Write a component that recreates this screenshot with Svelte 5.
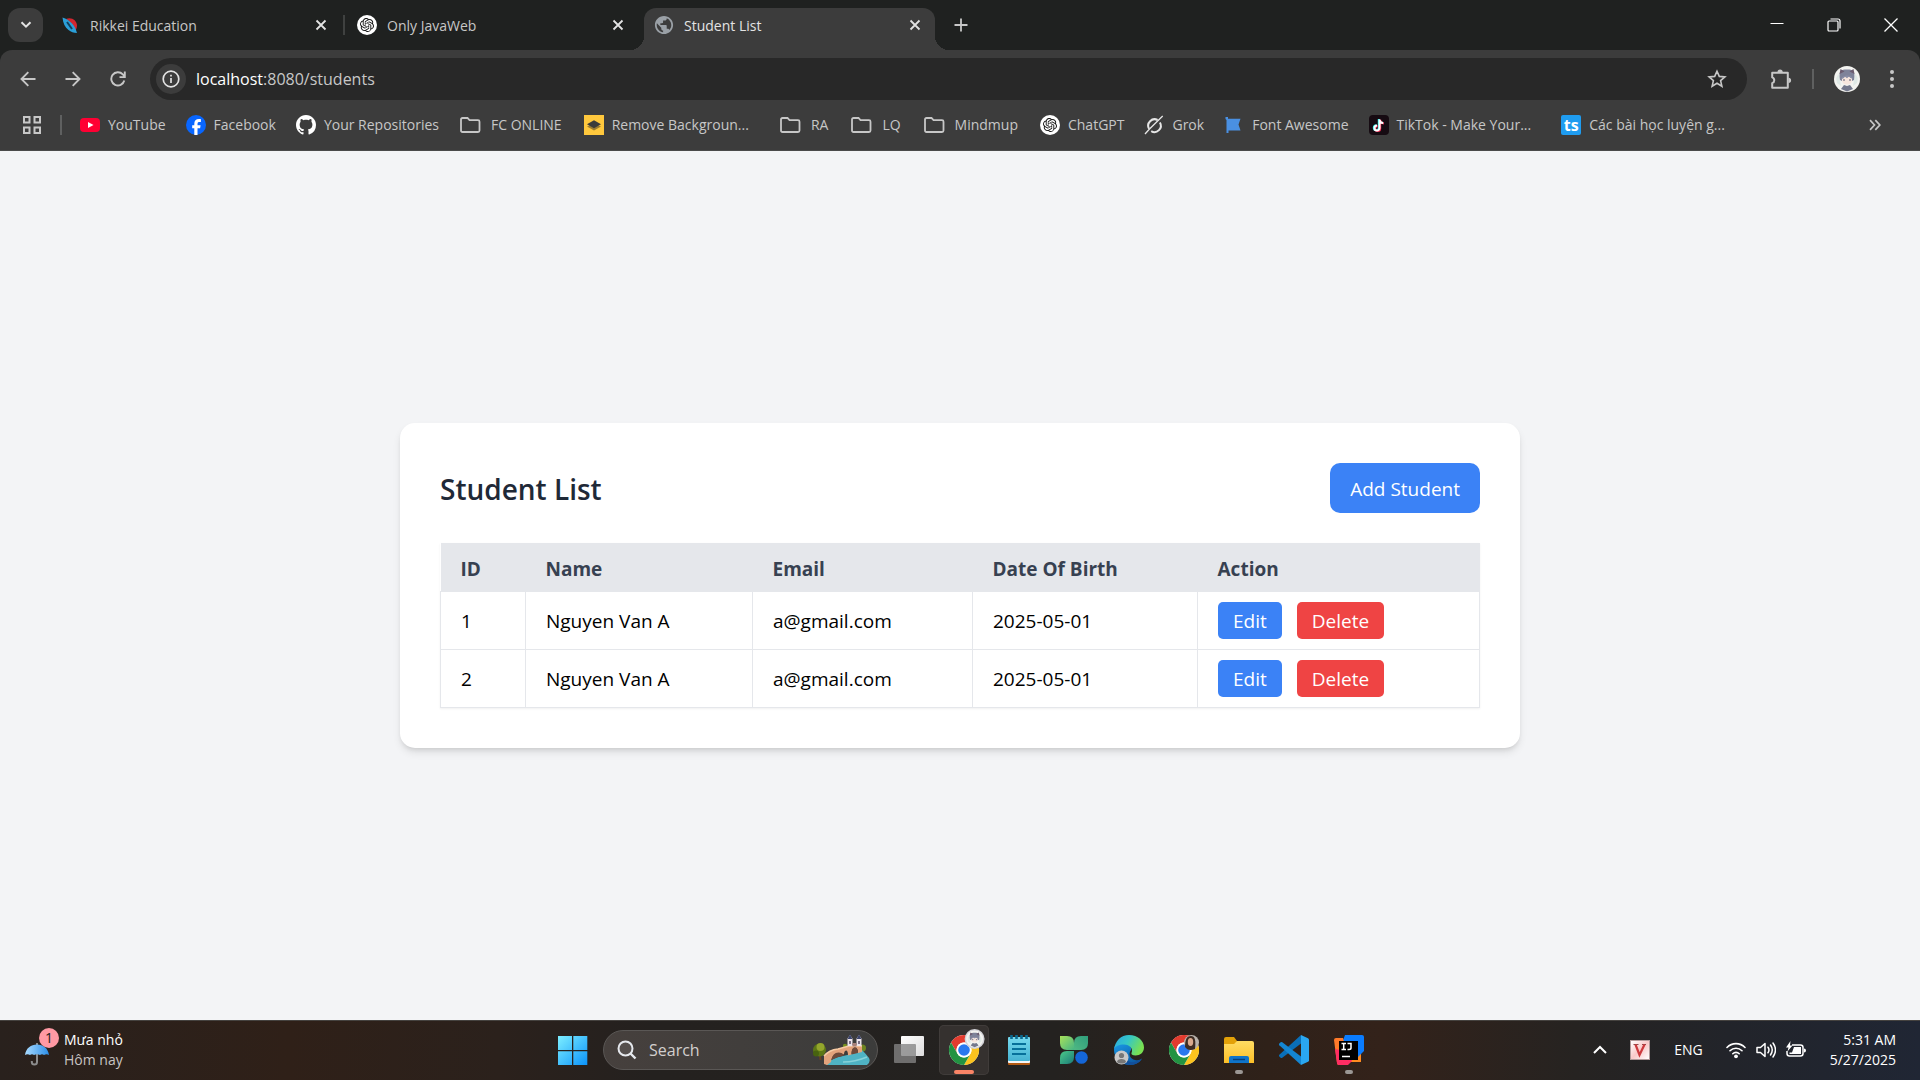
<script>
  const tabs = [
    { title: 'Rikkei Education', icon: 'rikkei', active: false },
    { title: 'Only JavaWeb', icon: 'gpt', active: false },
    { title: 'Student List', icon: 'globe', active: true }
  ];

  const bookmarks = [
    { label: 'YouTube', icon: 'youtube' },
    { label: 'Facebook', icon: 'facebook' },
    { label: 'Your Repositories', icon: 'github' },
    { label: 'FC ONLINE', icon: 'folder' },
    { label: 'Remove Backgroun...', icon: 'layers' },
    { label: 'RA', icon: 'folder', gap: true },
    { label: 'LQ', icon: 'folder' },
    { label: 'Mindmup', icon: 'folder' },
    { label: 'ChatGPT', icon: 'gpt' },
    { label: 'Grok', icon: 'grok' },
    { label: 'Font Awesome', icon: 'flag' },
    { label: 'TikTok - Make Your...', icon: 'tiktok' },
    { label: 'Các bài học luyện g...', icon: 'ts', gap: true }
  ];

  const columns = ['ID', 'Name', 'Email', 'Date Of Birth', 'Action'];
  const students = [
    { id: 1, name: 'Nguyen Van A', email: 'a@gmail.com', dob: '2025-05-01' },
    { id: 2, name: 'Nguyen Van A', email: 'a@gmail.com', dob: '2025-05-01' }
  ];

  const apps = [
    { name: 'Task view', icon: 'taskview' },
    { name: 'Chrome', icon: 'chrome', state: 'active' },
    { name: 'Notepad', icon: 'notepad' },
    { name: 'Clover', icon: 'clover' },
    { name: 'Edge', icon: 'edge' },
    { name: 'Chrome profile', icon: 'chrome2' },
    { name: 'File Explorer', icon: 'explorer', state: 'open' },
    { name: 'Visual Studio Code', icon: 'vscode' },
    { name: 'IntelliJ IDEA', icon: 'idea', state: 'open' }
  ];
</script>

{#snippet closeX()}
  <svg width="12" height="12" viewBox="0 0 12 12" aria-hidden="true"><path d="M1.5 1.5l9 9M10.5 1.5l-9 9" stroke="currentColor" stroke-width="1.8" /></svg>
{/snippet}

{#snippet chromeLogo()}
  <circle cx="15" cy="15" r="15" fill="#fff" />
  <path d="M2 7.5A15 15 0 0 1 28 7.5H15A7.5 7.5 0 0 0 8.5 18.75z" fill="#e33b2e" />
  <path d="M28 7.5A15 15 0 0 1 15 30L21.5 18.75A7.5 7.5 0 0 0 15 7.5z" fill="#fcc31e" />
  <path d="M15 30A15 15 0 0 1 2 7.5L8.5 18.75A7.5 7.5 0 0 0 21.5 18.75z" fill="#229342" />
  <circle cx="15" cy="15" r="7.5" fill="#fff" />
  <circle cx="15" cy="15" r="5.8" fill="#2a78ee" />
{/snippet}

{#snippet face()}
  <circle cx="13" cy="13" r="13" fill="#f3f3f0" />
  <path d="M3 17q-2-6 2-9l2 12zM23 17q2-6-2-9l-2 12z" fill="#dfe9e6" />
  <path d="M6 14C4 3 9 3.500 13 3.500S22 3 20 14l-2 1H8z" fill="#7e8299" />
  <path d="M5.500 8l1-5 4 2.500zM20.500 8l-1-5-4 2.500z" fill="#6c5c70" />
  <path d="M8 12q5-3 10 0v3q-1 3.500-5 3.500T8 15z" fill="#f7e6de" />
  <path d="M7 13.500c1-5 11-5.500 12-.5l-2.500-1-1.500-1.500-2 1.700-2-1.500-1.500 1.600z" fill="#8a8ea6" />
  <path d="M9 14h2M15 14h2" stroke="#5b5a70" stroke-width="1.200" />
  <path d="M7 23l3-4 3 1 3-1 3 4-6 2.500z" fill="#74788c" />
{/snippet}

{#snippet icon(name)}
  {#if name === 'rikkei'}
    <svg width="20" height="20" viewBox="0 0 20 20" aria-hidden="true">
      <path d="M6 4c5-2.500 11 1 11 6.500 0 2.500-1 4.500-2.500 6C14.500 12 11.500 7.500 6 4z" fill="#d3262f" />
      <path d="M2.500 2.500C10 5 15 10 17 18c-3.500-.3-6-1-8.500-3C5 12.500 3 8 2.500 2.500z" fill="#2b9fd8" />
      <path d="M7 7l5 7" stroke="#12405e" stroke-width="2" />
    </svg>
  {:else if name === 'gpt'}
    <svg width="20" height="20" viewBox="0 0 20 20" aria-hidden="true">
      <circle cx="10" cy="10" r="10" fill="#fff" />
      <path transform="translate(3 3) scale(.583)" fill="#111" d="M22.2819 9.8211a5.9847 5.9847 0 0 0-.5157-4.9108 6.0462 6.0462 0 0 0-6.5098-2.9A6.0651 6.0651 0 0 0 4.9807 4.1818a5.9847 5.9847 0 0 0-3.9977 2.9 6.0462 6.0462 0 0 0 .7427 7.0966 5.98 5.98 0 0 0 .511 4.9107 6.051 6.051 0 0 0 6.5146 2.9001A5.9847 5.9847 0 0 0 13.2599 24a6.0557 6.0557 0 0 0 5.7718-4.2058 5.9894 5.9894 0 0 0 3.9977-2.9001 6.0557 6.0557 0 0 0-.7475-7.0729zm-9.022 12.6081a4.4755 4.4755 0 0 1-2.8764-1.0408l.1419-.0804 4.7783-2.7582a.7948.7948 0 0 0 .3927-.6813v-6.7369l2.02 1.1686a.071.071 0 0 1 .038.052v5.5826a4.504 4.504 0 0 1-4.4945 4.4944zm-9.6607-4.1254a4.4708 4.4708 0 0 1-.5346-3.0137l.142.0852 4.783 2.7582a.7712.7712 0 0 0 .7806 0l5.8428-3.3685v2.3324a.0804.0804 0 0 1-.0332.0615L9.74 19.9502a4.4992 4.4992 0 0 1-6.1408-1.6464zM2.3408 7.8956a4.485 4.485 0 0 1 2.3655-1.9728V11.6a.7664.7664 0 0 0 .3879.6765l5.8144 3.3543-2.0201 1.1685a.0757.0757 0 0 1-.071 0l-4.8303-2.7865A4.504 4.504 0 0 1 2.3408 7.872zm16.5963 3.8558L13.1038 8.364 15.1192 7.2a.0757.0757 0 0 1 .071 0l4.8303 2.7913a4.4944 4.4944 0 0 1-.6765 8.1042v-5.6772a.79.79 0 0 0-.407-.667zm2.0107-3.0231l-.142-.0852-4.7735-2.7818a.7759.7759 0 0 0-.7854 0L9.409 9.2297V6.8974a.0662.0662 0 0 1 .0284-.0615l4.8303-2.7866a4.4992 4.4992 0 0 1 6.6802 4.66zM8.3065 12.863l-2.02-1.1638a.0804.0804 0 0 1-.038-.0567V6.0742a4.4992 4.4992 0 0 1 7.3757-3.4537l-.142.0805L8.704 5.459a.7948.7948 0 0 0-.3927.6813zm1.0976-2.3654l2.602-1.4998 2.6069 1.4998v2.9994l-2.5974 1.4997-2.6067-1.4997Z" />
    </svg>
  {:else if name === 'globe'}
    <svg width="20" height="20" viewBox="1 1 22 22" aria-hidden="true">
      <path fill="#9aa0a6" d="M12 2C6.480 2 2 6.480 2 12s4.480 10 10 10 10-4.480 10-10S17.520 2 12 2zm-1 17.930c-3.950-.490-7-3.850-7-7.930 0-.620.080-1.210.210-1.790L9 15v1c0 1.100.9 2 2 2v1.930zm6.900-2.540c-.260-.810-1-1.390-1.900-1.390h-1v-3c0-.550-.450-1-1-1H8v-2h2c.550 0 1-.450 1-1V7h2c1.100 0 2-.9 2-2v-.410c2.930 1.190 5 4.060 5 7.410 0 2.080-.8 3.970-2.100 5.390z" />
    </svg>
  {:else if name === 'youtube'}
    <svg width="20" height="20" viewBox="0 0 20 20" aria-hidden="true"><rect y="3" width="20" height="14" rx="4" fill="#ff0033" /><path d="M8 7l5.500 3L8 13z" fill="#fff" /></svg>
  {:else if name === 'facebook'}
    <svg width="20" height="20" viewBox="0 0 20 20" aria-hidden="true"><circle cx="10" cy="10" r="10" fill="#0866ff" /><path d="M8.300 20v-6.700H6.200v-3h2.100V9c0-3.400 1.500-4.900 4.800-4.900.6 0 1.400.1 1.800.2V7h-1.300c-1.500 0-2.100.6-2.100 2v1.300h3.100l-.5 3h-2.600V20z" fill="#fff" /></svg>
  {:else if name === 'github'}
    <svg width="20" height="20" viewBox="0 0 16 16" aria-hidden="true"><path fill="#fff" d="M8 0C3.580 0 0 3.580 0 8c0 3.540 2.290 6.530 5.470 7.590.4.070.550-.170.550-.380 0-.190-.010-.820-.010-1.490-2.010.370-2.530-.490-2.690-.940-.090-.230-.480-.940-.820-1.130-.280-.150-.680-.520-.010-.530.630-.010 1.080.580 1.230.820.720 1.210 1.870.870 2.330.660.070-.520.280-.870.510-1.070-1.780-.200-3.640-.890-3.640-3.950 0-.870.310-1.590.820-2.150-.080-.200-.360-1.020.080-2.120 0 0 .670-.210 2.200.820.640-.180 1.320-.270 2-.270s1.360.090 2 .270c1.530-1.040 2.200-.820 2.200-.820.440 1.100.160 1.920.080 2.120.510.560.820 1.270.820 2.150 0 3.070-1.870 3.750-3.650 3.950.290.250.540.730.540 1.480 0 1.070-.010 1.930-.010 2.200 0 .210.150.460.550.380A8.010 8.010 0 0 0 16 8c0-4.420-3.580-8-8-8z" /></svg>
  {:else if name === 'folder'}
    <svg width="22" height="20" viewBox="0 0 22 20" aria-hidden="true"><path d="M2 4.500q0-1.500 1.500-1.500H8.500L10.500 5.200H19q1.500 0 1.500 1.500V15.500q0 1.500-1.500 1.500H3.500Q2 17 2 15.500z" fill="none" stroke="#c7c7c7" stroke-width="1.800" /></svg>
  {:else if name === 'layers'}
    <svg width="20" height="20" viewBox="0 0 20 20" aria-hidden="true"><rect width="20" height="20" fill="#ffc83d" /><path d="M3 11.500l7-3 7 3-7 4z" fill="#9c7c30" /><path d="M3 9.200L10 5.200l7 4-7 4z" fill="#3b3b3b" /></svg>
  {:else if name === 'grok'}
    <svg width="20" height="20" viewBox="0 0 20 20" aria-hidden="true"><g fill="none" stroke="#e6e6e6" stroke-width="2"><path d="M13.600 5A6.400 6.400 0 0 0 5 13.700M15.900 7.400A6.400 6.400 0 0 1 7.200 16.200" /><path d="M1 19l4.500-5L18.700 1" stroke-width="1.300" /></g></svg>
  {:else if name === 'flag'}
    <svg width="20" height="20" viewBox="0 0 20 20" aria-hidden="true"><path d="M1.500 2h2.500v1.700H16.500L14.500 9.500l2 6H4.500V18H2.500V5L1.500 4z" fill="#4a90e2" /></svg>
  {:else if name === 'tiktok'}
    <svg width="20" height="20" viewBox="0 0 20 20" aria-hidden="true">
      <rect width="20" height="20" rx="4" fill="#160b12" />
      <g fill="none" stroke-width="2">
        <path d="M9.800 4v8.700a2.500 2.500 0 1 1-2.500-2.500M9.800 4.400c.3 2 1.700 3.200 3.700 3.300" stroke="#25f4ee" />
        <path d="M11.200 4.800v8.700A2.500 2.500 0 1 1 8.700 11M11.200 5.200c.3 2 1.700 3.200 3.700 3.300" stroke="#fe2c55" />
        <path d="M10.500 4.400v8.700A2.500 2.500 0 1 1 8 10.600M10.500 4.800c.3 2 1.700 3.200 3.700 3.300" stroke="#fff" />
      </g>
    </svg>
  {:else if name === 'ts'}
    <span class="ts">ts</span>
  {:else if name === 'taskview'}
    <svg width="30" height="30" viewBox="0 0 30 30" aria-hidden="true">
      <defs><linearGradient id="tv" x2="1" y2="1"><stop stop-color="#fff" /><stop offset="1" stop-color="#dcdcdc" /></linearGradient></defs>
      <rect x="7" y="1" width="23" height="20" rx="1" fill="url(#tv)" /><rect y="9" width="22" height="19" rx="1" fill="#848484" fill-opacity=".78" />
    </svg>
  {:else if name === 'chrome'}
    <svg class="overflowing" width="30" height="30" viewBox="0 0 30 30" aria-hidden="true">
      {@render chromeLogo()}
      <circle cx="25.600" cy="4" r="10" fill="#d3d3d8" />
      <g transform="translate(17.100 -4.500) scale(.655)">{@render face()}</g>
    </svg>
  {:else if name === 'notepad'}
    <svg width="30" height="30" viewBox="0 0 30 30" aria-hidden="true">
      <defs><linearGradient id="np" x2="0" y2="1"><stop stop-color="#75d9ee" /><stop offset="1" stop-color="#46b3d2" /></linearGradient></defs>
      <rect x="4" y="24" width="22" height="6" rx="1" fill="#b35a12" /><rect x="4" y="22" width="22" height="6" rx="1" fill="#f5f5f5" /><rect x="4" y="2" width="22" height="24" rx="1" fill="url(#np)" />
      <path d="M8 9h14M8 14h14M8 19h14" stroke="#06709a" stroke-width="1.800" />
      <path d="M7.500 0v4M12.500 0v4M17.500 0v4M22.500 0v4" stroke="#0a6a90" stroke-width="2.600" />
    </svg>
  {:else if name === 'clover'}
    <svg width="30" height="30" viewBox="0 0 30 30" aria-hidden="true">
      <defs>
        <linearGradient id="c1" x2="1" y2="1"><stop stop-color="#a8e05a" /><stop offset="1" stop-color="#45b585" /></linearGradient>
        <linearGradient id="c2" x1="1" x2="0" y2="1"><stop stop-color="#2f9e7c" /><stop offset="1" stop-color="#4fb883" /></linearGradient>
        <linearGradient id="c3" x2="1" y2="1"><stop stop-color="#4ccb8a" /><stop offset="1" stop-color="#1b7a78" /></linearGradient>
      </defs>
      <path d="M1 1h7q7 0 7 7v7H8q-7 0-7-7z" fill="url(#c1)" /><path d="M29 1h-7q-7 0-7 7v7h7q7 0 7-7z" fill="url(#c2)" /><path d="M1 29h7q7 0 7-7v-6H8q-7 0-7 7z" fill="url(#c3)" /><circle cx="22.500" cy="22.500" r="6.300" fill="#1466d8" />
    </svg>
  {:else if name === 'edge'}
    <svg width="30" height="30" viewBox="0 0 30 30" aria-hidden="true">
      <defs>
        <linearGradient id="e1" x2="1" y2=".4"><stop stop-color="#2aa5e6" /><stop offset=".5" stop-color="#35c7c6" /><stop offset="1" stop-color="#78e052" /></linearGradient>
        <linearGradient id="e2" x2=".6" y2="1"><stop stop-color="#1b9be8" /><stop offset="1" stop-color="#0c59a4" /></linearGradient>
      </defs>
      <path d="M0 15C0 9 5 8 9 8c6 0 9 4 8 7-3 4-1 9 4 10 3 .5 5 0 7-1-3 4-7 6-12.500 6C7 30 0 23 0 15z" fill="url(#e2)" />
      <path d="M10 17c-1 6 4 11 10 10 4-.5 6-2 8-4-3 6-8 7-13 7-5-1-8-7-5-13z" fill="#124f9a" />
      <path d="M0 14.500C1 6 7 0 15 0c9 0 15 6 15 12.500 0 5-4 8-8.500 8-3 0-4.500-1-4-2.500 2-4-1.500-8.500-7.500-8.500C5 9.500 1 11 0 14.500z" fill="url(#e1)" />
      <circle cx="7.500" cy="22.500" r="7" fill="#c9c9c9" /><circle cx="7.500" cy="20.500" r="2.600" fill="#777" /><path d="M3 27c0-4 9-4 9 0-2 2-7 2-9 0z" fill="#777" />
    </svg>
  {:else if name === 'chrome2'}
    <svg width="30" height="30" viewBox="0 0 30 30" aria-hidden="true">
      {@render chromeLogo()}
      <circle cx="22.500" cy="7.500" r="7.500" fill="#b9b3ad" /><path d="M16 12c0-8 2-11 6-11s5 4 4 13q-5 2-8 0z" fill="#3d2c23" /><ellipse cx="21.500" cy="7" rx="2.700" ry="4" fill="#d9a98e" />
    </svg>
  {:else if name === 'explorer'}
    <svg width="30" height="30" viewBox="0 0 30 30" aria-hidden="true">
      <defs><linearGradient id="fx" x2="0" y2="1"><stop stop-color="#ffdc63" /><stop offset="1" stop-color="#fcbf28" /></linearGradient></defs>
      <path d="M0 4q0-2 2-2h8l3 4h15v6H0z" fill="#e3a108" /><path d="M0 9h10l3-3h15q2 0 2 2v20H0z" fill="url(#fx)" /><path d="M5 28v-5q0-2 2-2h16q2 0 2 2v5z" fill="#0f74c9" /><path d="M9 24.500h12" stroke="#073f78" stroke-width="1.400" />
    </svg>
  {:else if name === 'vscode'}
    <svg width="30" height="30" viewBox="0 0 30 30" aria-hidden="true">
      <path d="M22 0v8.500L3.300 22.700q-.9.600-1.700 0L.3 21.400q-.8-.8 0-1.600z" fill="#0a6fb8" /><path d="M22 30v-8.500L3.300 7.300q-.9-.6-1.700 0L.3 8.600q-.8.8 0 1.600z" fill="#1486d3" /><path d="M22 0l7 3.200q1 .5 1 1.600v20.400q0 1.100-1 1.600L22 30z" fill="#2aa7f1" />
    </svg>
  {:else if name === 'idea'}
    <svg width="30" height="30" viewBox="0 0 30 30" aria-hidden="true">
      <path d="M16 14h11v13H12z" fill="#ff8a1f" /><path d="M11 0h17q2 0 2 2v14l-6 6L8 8z" fill="#0a7cff" /><path d="M0 5q0-2 2-2h7l6 22v3l-3 2H5q-2 0-2-2z" fill="#ff7a2a" /><path d="M1 14l14 3 3 9-4 4H5q-2 0-2-2z" fill="#ff2d62" />
      <rect x="5" y="6" width="19" height="19" fill="#000" /><path d="M7.500 8.500h4.500M9.700 8.500v6M7.500 14.500h4.500M13.500 8.500h3.500v4.500q0 1.500-2 1.500h-1.500M8 21.500h8" stroke="#fff" stroke-width="1.500" fill="none" />
    </svg>
  {/if}
{/snippet}

<div class="desktop">
  <header class="browser">
    <div class="tabstrip">
      <button class="tab-search" aria-label="Search tabs">
        <svg width="12" height="8" viewBox="0 0 12 8" aria-hidden="true"><path d="M1.500 1.200L6 5.700l4.500-4.500" fill="none" stroke="#e3e3e3" stroke-width="2" /></svg>
      </button>
      <div class="tabs">
        {#each tabs as tab}
          <div class="tab" class:active={tab.active}>
            <span class="favicon">{@render icon(tab.icon)}</span>
            <span class="tab-title">{tab.title}</span>
            <button class="bare close" aria-label="Close {tab.title}">{@render closeX()}</button>
          </div>
        {/each}
      </div>
      <button class="bare new-tab" aria-label="New tab">
        <svg width="14" height="14" viewBox="0 0 14 14" aria-hidden="true"><path d="M7 .5v13M.5 7h13" stroke="#c7c7c7" stroke-width="1.800" /></svg>
      </button>
      <div class="window-controls">
        <button class="bare" aria-label="Minimize"><svg width="14" height="14" viewBox="0 0 14 14" aria-hidden="true"><path d="M.5 5.500h13" stroke="#fff" /></svg></button>
        <button class="bare" aria-label="Restore"><svg width="14" height="14" viewBox="0 0 14 14" aria-hidden="true"><rect x="1" y="3" width="10" height="10" rx="1" fill="none" stroke="#fff" stroke-width="1.200" /><path d="M3.500 1h7.500q2 0 2 2v7.500" fill="none" stroke="#fff" stroke-width="1.200" /></svg></button>
        <button class="bare" aria-label="Close window"><svg width="14" height="14" viewBox="0 0 14 14" aria-hidden="true"><path d="M.5.5l13 13M13.500.5l-13 13" stroke="#fff" stroke-width="1.300" /></svg></button>
      </div>
    </div>

    <div class="toolbar">
      <nav class="nav" aria-label="History">
        <button class="bare" aria-label="Back"><svg width="16" height="16" viewBox="0 0 16 16" aria-hidden="true"><path d="M15.500 8H2M8.300 1.200L1.500 8l6.800 6.800" fill="none" stroke="#c7c7c7" stroke-width="1.900" /></svg></button>
        <button class="bare" aria-label="Forward"><svg width="16" height="16" viewBox="0 0 16 16" aria-hidden="true"><path d="M.5 8H14M7.700 1.200L14.500 8l-6.800 6.800" fill="none" stroke="#c7c7c7" stroke-width="1.900" /></svg></button>
        <button class="bare" aria-label="Reload"><svg width="16" height="16" viewBox="0 0 16 16" aria-hidden="true"><path d="M14.300 9.500A6.600 6.600 0 1 1 12.800 3.400L14.800 5.600M14.800.5v5.600H9.500" fill="none" stroke="#c7c7c7" stroke-width="1.900" /></svg></button>
      </nav>
      <div class="omnibox">
        <button class="site-info" aria-label="Site information"><svg width="18" height="18" viewBox="0 0 18 18" aria-hidden="true"><circle cx="9" cy="9" r="7.800" fill="none" stroke="#e3e3e3" stroke-width="1.700" /><path d="M9 8v5M9 4.800v1.800" stroke="#e3e3e3" stroke-width="1.700" /></svg></button>
        <div class="url" role="textbox" tabindex="0" aria-label="Address bar"><b>localhost</b>:8080/students</div>
        <button class="bare star" aria-label="Bookmark this tab"><svg width="20" height="20" viewBox="0 0 20 20" aria-hidden="true"><path d="M10 2.200l2.300 5.200 5.600.5-4.300 3.700 1.300 5.600L10 14.200l-4.900 3 1.300-5.600L2.100 7.900l5.600-.5z" fill="none" stroke="#c7c7c7" stroke-width="1.600" /></svg></button>
      </div>
      <div class="actions">
        <button class="bare" aria-label="Extensions"><svg width="22" height="22" viewBox="0 0 22 22" aria-hidden="true"><path d="M2.200 4.700h15.600v15.100H2.200v-4.700a3 3 0 0 0 0-5.700z" fill="none" stroke="#c7c7c7" stroke-width="2" stroke-linejoin="round" /><path d="M7.500 4a2.600 2.600 0 0 1 5.200 0zM18.500 9.700a2.600 2.600 0 0 1 0 5.200z" fill="#c7c7c7" /></svg></button>
        <span class="divider"></span>
        <button class="bare" aria-label="Profile"><svg width="26" height="26" viewBox="0 0 26 26" aria-hidden="true">{@render face()}</svg></button>
        <button class="bare menu" aria-label="Menu"><svg width="6" height="22" viewBox="0 0 6 22" aria-hidden="true"><g fill="#c7c7c7"><circle cx="3" cy="4" r="2" /><circle cx="3" cy="11" r="2" /><circle cx="3" cy="18" r="2" /></g></svg></button>
      </div>
    </div>

    <nav class="bookmarks" aria-label="Bookmarks">
      <button class="bare" aria-label="Apps"><svg width="18" height="18" viewBox="0 0 18 18" aria-hidden="true"><g fill="none" stroke="#c7c7c7" stroke-width="2"><rect x="1" y="1" width="5.500" height="5.500" /><rect x="11.500" y="1" width="5.500" height="5.500" /><rect x="1" y="11.500" width="5.500" height="5.500" /><rect x="11.500" y="11.500" width="5.500" height="5.500" /></g></svg></button>
      <span class="divider"></span>
      <div class="links">
        {#each bookmarks as b}
          <a href="#top" class:gap={b.gap} class:folder={b.icon === 'folder'}>{@render icon(b.icon)}<span>{b.label}</span></a>
        {/each}
      </div>
      <button class="bare more" aria-label="More bookmarks"><svg width="12" height="12" viewBox="0 0 12 12" aria-hidden="true"><path d="M1 1.200L5.500 6 1 10.800M6.300 1.200L10.800 6l-4.500 4.800" fill="none" stroke="#c7c7c7" stroke-width="1.700" /></svg></button>
    </nav>
  </header>

  <main>
    <section class="card">
      <div class="card-head">
        <h1>Student List</h1>
        <button class="add">Add Student</button>
      </div>
      <table>
        <colgroup><col class="c-id" /><col class="c-name" /><col class="c-email" /><col class="c-dob" /><col /></colgroup>
        <thead>
          <tr>{#each columns as c}<th scope="col">{c}</th>{/each}</tr>
        </thead>
        <tbody>
          {#each students as s}
            <tr>
              <td>{s.id}</td>
              <td>{s.name}</td>
              <td>{s.email}</td>
              <td>{s.dob}</td>
              <td class="action-cell"><div class="row-actions"><button class="edit">Edit</button><button class="delete">Delete</button></div></td>
            </tr>
          {/each}
        </tbody>
      </table>
    </section>
  </main>

  <footer class="taskbar">
    <button class="bare weather">
      <span class="umbrella">
        <svg width="36" height="40" viewBox="0 0 36 40" aria-hidden="true">
          <defs><linearGradient id="um" x2="1"><stop stop-color="#a9dbff" /><stop offset="1" stop-color="#2b8ee8" /></linearGradient></defs>
          <path d="M12 13v19a2.600 2.600 0 0 1-5.200 0v-1" fill="none" stroke="#8c8c8c" stroke-width="2" />
          <path d="M0 25C1 18 6 14.500 12 14.500S23 18 24 25q-2.500-1.500-5 0-2-1.500-4 0-3-1.500-6 0-2-1.500-4 0-2.500-1.500-5 0z" fill="url(#um)" />
        </svg>
        <span class="badge">1</span>
      </span>
      <span class="weather-text"><span>Mưa nhỏ</span><span class="dim">Hôm nay</span></span>
    </button>

    <div class="apps">
      <button class="bare app" aria-label="Start">
        <svg width="30" height="30" viewBox="0 0 30 30" aria-hidden="true">
          <defs><linearGradient id="win" gradientUnits="userSpaceOnUse" x1="0" y1="0" x2="30" y2="30"><stop stop-color="#7ff0ff" /><stop offset="1" stop-color="#0a92fa" /></linearGradient></defs>
          <path d="M0 1h14v14H0zM15.300 1h14v14h-14zM0 16.300h14v13.700H0zM15.300 16.300h14v13.700h-14z" fill="url(#win)" />
        </svg>
      </button>
      <label class="search">
        <svg width="20" height="20" viewBox="0 0 20 20" aria-hidden="true"><circle cx="8.500" cy="8.500" r="7" fill="#55504e" stroke="#e6e9ee" stroke-width="2" /><path d="M13.500 13.500l5 5" stroke="#e6e9ee" stroke-width="2.400" /></svg>
        <input type="text" placeholder="Search" aria-label="Search" />
        <svg width="57" height="32" viewBox="0 0 57 32" aria-hidden="true">
          <circle cx="32" cy="12" r="2.200" fill="#77901f" /><circle cx="49.500" cy="14" r="3.500" fill="#6f8420" />
          <path d="M13 30q6-6 17-8 14-3 19-6 4 4 7 8 2 4-2 7H14z" fill="#4fb3c4" /><path d="M30 28q12 0 24-5" stroke="#86d2da" stroke-width="1.500" fill="none" />
          <path d="M11 30V22q4-6 14-7l11-3h13v6l-4 1q0-6-3.500-5.500-3 .5-3 7l-3.500 1q0-5-2-5-2 .5-2 4-7-4-11.500 2.500-1.500 2-1.500 5l-4 3z" fill="#e3a37c" />
          <path d="M11 22q5-6 14-7l11-3h13" stroke="#f7cba4" stroke-width="1.500" fill="none" />
          <path d="M18.500 26q1-7.500 7-7.500 4 0 5.500 3-7 1-12.500 4.500zM38.500 20.500q0-7 3-7 3.500 0 3.500 5.500z" fill="#6f4a3b" />
          <path d="M34.500 12V4.500L37 1l2.500 3.500V12zM43.500 12V4.500L46 1l2.500 3.500V12z" fill="#ece4ea" /><path d="M34.500 5L37 .5 39.500 5zM43.500 5L46 .5 48.500 5z" fill="#3d466c" /><path d="M36.300 7h1.400v3h-1.400zM45.300 7h1.400v3h-1.400z" fill="#4a3f5c" /><path d="M39.500 9h4v3.500h-4z" fill="#a88078" />
          <path d="M6.500 18l1 8" stroke="#6b4220" stroke-width="2" /><ellipse cx="6.500" cy="16" rx="6.500" ry="6.500" fill="#5d7716" /><circle cx="7.500" cy="13" r="4" fill="#93a52c" /><circle cx="3" cy="19.500" r="3" fill="#48630f" />
        </svg>
      </label>
      {#each apps as a}
        <button class="bare app {a.state ?? ''}" aria-label={a.name}>{@render icon(a.icon)}</button>
      {/each}
    </div>

    <div class="tray">
      <button class="bare" aria-label="Show hidden icons"><svg width="14" height="10" viewBox="0 0 14 10" aria-hidden="true"><path d="M1 8l6-6 6 6" fill="none" stroke="#fff" stroke-width="2" /></svg></button>
      <button class="bare unikey" aria-label="UniKey"><svg width="20" height="20" viewBox="0 0 20 20" aria-hidden="true"><defs><linearGradient id="uk" x2="1" y2="1"><stop stop-color="#fff" /><stop offset=".5" stop-color="#f9c9c9" /><stop offset="1" stop-color="#fff" /></linearGradient></defs><rect width="20" height="20" fill="#b09a9a" /><rect x="1" y="1" width="18" height="18" fill="url(#uk)" /><path d="M3.500 4.500h5M12 4.500h4" stroke="#8d4a4a" stroke-width="1.200" /><path d="M5.500 4.500l4 10.500 5-10.500" fill="none" stroke="#cc3a3e" stroke-width="2.200" /></svg></button>
      <button class="bare lang">ENG</button>
      <button class="bare status" aria-label="Network, volume and battery">
        <svg width="20" height="18" viewBox="0 0 20 18" aria-hidden="true"><g fill="none" stroke="#fff" stroke-width="1.600" stroke-linecap="round"><path d="M1 6.500a12.500 12.500 0 0 1 18 0M4 9.700a8.500 8.500 0 0 1 12 0M6.800 12.700a4.500 4.500 0 0 1 6.400 0" /></g><circle cx="10" cy="15.300" r="1.900" fill="#fff" /></svg>
        <svg width="20" height="18" viewBox="0 0 20 18" aria-hidden="true"><g fill="none" stroke="#fff" stroke-width="1.500" stroke-linejoin="round" stroke-linecap="round"><path d="M1 6.500h3.500L9 2.500v13L4.500 11.500H1zM12 6.200q2 2.800 0 5.600M14.500 4q3.500 5 0 10M17 2q5 7 0 14" /></g></svg>
        <svg width="20" height="18" viewBox="0 0 20 18" aria-hidden="true"><path d="M6 4h8.500q2.500 0 2.500 2.500v6q0 2.500-2.500 2.500H3.500Q1 15 1 12.500V10" fill="none" stroke="#fff" stroke-width="1.500" /><path d="M8 6h7v7H3.500v-1.500H6z" fill="#fff" /><path d="M18 7.500q2 0 2 2t-2 2z" fill="#fff" /><path d="M4.500 0L0 6.500h2.500L1.500 10.500 6.500 4.500H4z" fill="#fff" /></svg>
      </button>
      <button class="bare clock"><span>5:31 AM</span><span>5/27/2025</span></button>
    </div>
  </footer>
</div>

<style>
  :global(body) {
    margin: 0;
  }

  .desktop {
    display: flex;
    flex-direction: column;
    min-height: 100vh;
    font-family: 'Open Sans', 'Noto Sans', sans-serif;
    font-size: 14px;
  }

  svg {
    display: block;
    flex: none;
  }

  .overflowing {
    overflow: visible;
  }

  button {
    font: inherit;
    border: 0;
    cursor: pointer;
  }

  .bare {
    display: flex;
    align-items: center;
    justify-content: center;
    padding: 0;
    background: none;
    color: inherit;
  }

  /* Browser frame */
  .browser {
    background: #1f2120;
    color: #c7c7c7;
  }

  .tabstrip {
    display: flex;
    align-items: stretch;
    height: 50px;
    padding-left: 8px;
  }

  .tab-search {
    display: flex;
    align-items: center;
    justify-content: center;
    width: 35px;
    height: 34px;
    margin-top: 8px;
    border-radius: 12px;
    background: #3c3c3c;
  }

  .tabs {
    display: flex;
    padding-top: 8px;
    margin-left: 4px;
    flex: 0 1 891px;
    min-width: 0;
  }

  .tab {
    position: relative;
    display: flex;
    align-items: center;
    flex: 1 1 0;
    gap: 10px;
    min-width: 0;
    margin: 0 3px;
    padding: 0 14px 8px 10px;
  }

  .tab:first-child::after {
    content: '';
    position: absolute;
    right: -4px;
    top: 7px;
    width: 2px;
    height: 20px;
    background: #3f4140;
  }

  .tab.active {
    background: #3c3c3c;
    border-radius: 12px 12px 0 0;
    color: #e3e3e3;
  }

  .tab.active::before,
  .tab.active::after {
    content: '';
    position: absolute;
    bottom: 0;
    width: 14px;
    height: 14px;
  }

  .tab.active::before {
    right: 100%;
    background: radial-gradient(circle at 0 0, transparent 14px, #3c3c3c 14px);
  }

  .tab.active::after {
    left: 100%;
    background: radial-gradient(circle at 100% 0, transparent 14px, #3c3c3c 14px);
  }

  .tab-title {
    flex: 1;
    overflow: hidden;
    white-space: nowrap;
    color: #c7c7c7;
  }

  .active .tab-title {
    color: #e3e3e3;
  }

  .close {
    color: #e3e3e3;
  }

  .new-tab {
    width: 46px;
  }

  .window-controls {
    display: flex;
    margin-left: auto;
    padding-right: 1px;
  }

  .window-controls button {
    width: 57px;
  }

  .toolbar {
    display: flex;
    align-items: center;
    height: 58px;
    background: #3c3c3c;
    border-radius: 12px 12px 0 0;
  }

  .nav {
    display: flex;
    padding: 0 10px 0 5px;
  }

  .nav button {
    width: 45px;
    height: 42px;
  }

  .omnibox {
    display: flex;
    align-items: center;
    flex: 1;
    height: 42px;
    padding: 0 20px 0 6px;
    border-radius: 21px;
    background: #282828;
    color: #c7c7c7;
    font-size: 16px;
  }

  .site-info {
    display: flex;
    align-items: center;
    justify-content: center;
    width: 30px;
    height: 30px;
    padding: 0;
    border-radius: 50%;
    background: #3c3c3c;
  }

  .url {
    flex: 1;
    margin-left: 10px;
  }

  .url b {
    font-weight: 400;
    color: #fff;
  }

  .actions {
    display: flex;
    align-items: center;
    gap: 20px;
    margin: 0 25px 0 23px;
  }

  .menu {
    margin-left: 9px;
  }

  .divider {
    width: 2px;
    height: 20px;
    background: #5f6060;
  }

  .bookmarks {
    display: flex;
    align-items: center;
    box-sizing: border-box;
    height: 43px;
    padding: 0 39px 10px 23px;
    background: #3c3c3c;
    box-shadow: inset 0 -1px #4a4a4a;
  }

  .bookmarks .divider {
    margin: 0 18px 0 19px;
  }

  .links {
    display: flex;
    gap: 20px;
    flex: 1;
    min-width: 0;
    overflow: hidden;
  }

  .links a {
    display: flex;
    align-items: center;
    gap: 8px;
    color: #c7c7c7;
    text-decoration: none;
    white-space: nowrap;
  }

  .links .folder {
    gap: 10px;
    margin-right: 2px;
  }

  .links .gap {
    margin-left: 10px;
  }

  .ts {
    width: 20px;
    height: 20px;
    background: #1f9cf0;
    color: #fff;
    font-weight: 700;
    font-size: 16px;
    line-height: 20px;
    text-align: center;
    border-radius: 2px;
  }

  /* Page */
  main {
    display: flex;
    align-items: center;
    justify-content: center;
    flex: 1;
    background: #f3f4f6;
    font-size: 19px;
  }

  .card {
    box-sizing: border-box;
    width: 100%;
    max-width: 1120px;
    padding: 40px;
    border-radius: 15px;
    background: #fff;
    box-shadow: 0 5px 8px -1px rgb(0 0 0 / 0.1), 0 3px 5px -2px rgb(0 0 0 / 0.1);
  }

  .card-head {
    display: flex;
    align-items: center;
    justify-content: space-between;
    margin-bottom: 30px;
  }

  h1 {
    margin: 0;
    padding-top: 2px;
    font-size: 28px;
    line-height: 40px;
    font-weight: 600;
    color: #1f2937;
  }

  .add {
    padding: 11px 20px 9px;
    border-radius: 10px;
    background: #3b82f6;
    color: #fff;
    line-height: 30px;
  }

  table {
    width: 100%;
    table-layout: fixed;
    border-collapse: collapse;
    box-shadow: 0 1px 2px rgb(0 0 0 / 0.06);
  }

  .c-id {
    width: 85px;
  }

  .c-name {
    width: 227px;
  }

  .c-email {
    width: 220px;
  }

  .c-dob {
    width: 225px;
  }

  th {
    padding: 12px 20px 8px;
    background: #e5e7eb;
    color: #374151;
    font-weight: 700;
    line-height: 28px;
    text-align: left;
  }

  td {
    padding: 11px 20px 9px;
    border: 1px solid #e5e7eb;
    color: #000;
    line-height: 37px;
  }

  .action-cell {
    padding: 10px 20px;
  }

  .row-actions {
    display: flex;
    gap: 15px;
  }

  .row-actions button {
    padding: 2px 15px 0;
    border-radius: 5px;
    color: #fff;
    line-height: 35px;
  }

  .edit {
    background: #3b82f6;
  }

  .delete {
    background: #ef4444;
  }

  /* Taskbar */
  .taskbar {
    display: grid;
    grid-template-columns: 1fr auto 1fr;
    align-items: center;
    box-sizing: border-box;
    height: 60px;
    padding-bottom: 2px;
    border-top: 1px solid #45423f;
    background: linear-gradient(90deg, #29211d, #2f2018 15%, #2b211c 26%, #24211f 34%, #242220 55%, #2f2119 66%, #33221a 72%, #262321 82%, #22242a 90%, #202634);
    color: #fff;
  }

  .weather {
    justify-self: start;
    gap: 3px;
    padding-left: 25px;
  }

  .umbrella {
    position: relative;
  }

  .badge {
    position: absolute;
    top: -2px;
    left: 14px;
    width: 20px;
    height: 20px;
    border-radius: 50%;
    background: #ff99a4;
    color: #1b1b1b;
    line-height: 20px;
    text-align: center;
  }

  .weather-text,
  .clock {
    display: flex;
    flex-direction: column;
    line-height: 20px;
  }

  .weather-text {
    align-items: flex-start;
  }

  .dim {
    color: #c8c4c2;
  }

  .apps {
    display: flex;
    align-items: center;
    gap: 5px;
    padding-left: 2px;
  }

  .app {
    position: relative;
    width: 50px;
    height: 50px;
    border-radius: 5px;
  }

  .active.app {
    background: #35312f;
    box-shadow: inset 0 0 0 1px #403c3a;
  }

  .active.app::after,
  .open.app::after {
    content: '';
    position: absolute;
    bottom: 1px;
    left: 50%;
    width: 20px;
    height: 4px;
    margin-left: -10px;
    border-radius: 2px;
    background: #f98466;
  }

  .open.app::after {
    width: 8px;
    margin-left: -4px;
    background: #9b9794;
  }

  .search {
    display: flex;
    align-items: center;
    gap: 12px;
    box-sizing: border-box;
    width: 275px;
    height: 40px;
    margin-right: 1px;
    padding: 0 7px 0 13px;
    border: 1px solid #5a5755;
    border-radius: 20px;
    background: linear-gradient(90deg, #46403d, #3c3c3b);
  }

  .search input {
    flex: 1;
    min-width: 0;
    padding: 0;
    border: 0;
    outline: 0;
    background: none;
    font: inherit;
    font-size: 16px;
    color: #fff;
  }

  .search input::placeholder {
    color: #d2cfce;
    opacity: 1;
  }

  .tray {
    display: flex;
    align-items: center;
    justify-self: end;
    padding-right: 24px;
  }

  .unikey {
    margin: 0 24px 0 23px;
  }

  .status {
    gap: 10px;
    margin: 0 24px 0 23px;
  }

  .clock {
    align-items: flex-end;
  }
</style>
